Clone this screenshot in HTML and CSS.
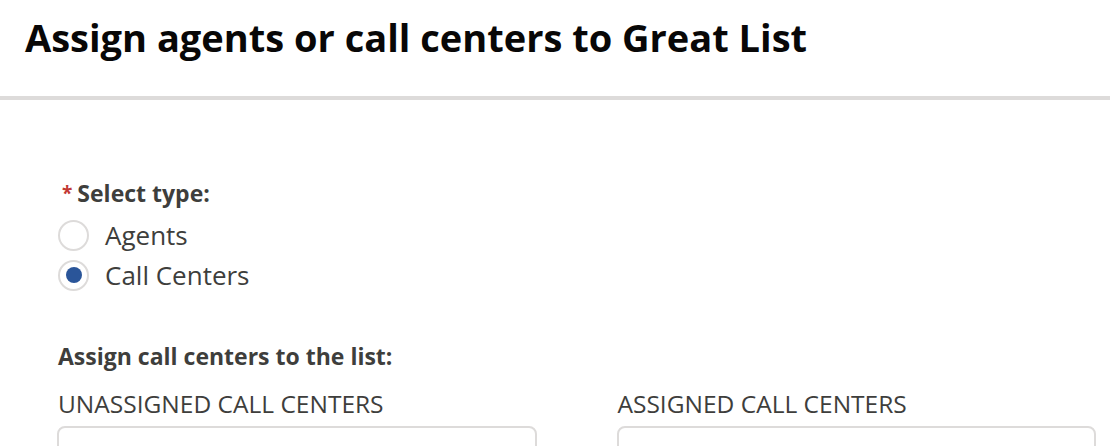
FILE: index.html
```html
<!DOCTYPE html>
<html lang="en">
<head>
<meta charset="utf-8">
<title>Assign agents or call centers</title>
<link rel="stylesheet" href="styles.css">
</head>
<body>
<header class="modal-header">
  <h1 class="title">Assign agents or call centers to Great List</h1>
</header>
<main class="modal-body">
  <div class="radio-group" role="radiogroup">
    <div class="form-label"><abbr class="required" title="required">*</abbr>Select type:</div>
    <label class="radio">
      <input type="radio" name="type" value="agents">
      <span class="radio-faux"></span>
      <span class="radio-label">Agents</span>
    </label>
    <label class="radio">
      <input type="radio" name="type" value="callcenters" checked>
      <span class="radio-faux"></span>
      <span class="radio-label">Call Centers</span>
    </label>
  </div>
  <section class="dueling">
    <h2 class="section-label">Assign call centers to the list:</h2>
    <div class="columns">
      <div class="column">
        <div class="list-label">UNASSIGNED CALL CENTERS</div>
        <div class="list-box"></div>
      </div>
      <div class="column">
        <div class="list-label">ASSIGNED CALL CENTERS</div>
        <div class="list-box"></div>
      </div>
    </div>
  </section>
</main>
</body>
</html>
```
FILE: styles.css
```css
html, body {
  margin: 0;
  padding: 0;
  background: #ffffff;
}
body {
  font-family: "Open Sans", "Noto Sans", sans-serif;
  color: #3e3e3c;
  width: 1110px;
  height: 446px;
  overflow: hidden;
}
.modal-header {
  box-sizing: border-box;
  height: 100px;
  padding: 13px 25px 0;
  border-bottom: 4px solid #dddbda;
}
.title {
  margin: 0;
  font-size: 38px;
  line-height: 48px;
  font-weight: 700;
  color: #080707;
  white-space: nowrap;
}
.modal-body {
  padding: 78px 14px 0 58px;
}
.form-label {
  font-size: 23px;
  line-height: 30px;
  font-weight: 700;
  color: #3e3e3c;
  margin-bottom: 7px;
  white-space: nowrap;
}
.required {
  color: #c23934;
  text-decoration: none;
  border: 0;
  margin: 0 5px 0 4px;
  font-weight: 700;
  font-size: 19px;
  vertical-align: 2px;
}
.radio {
  display: flex;
  align-items: center;
  height: 40px;
  cursor: pointer;
}
.radio input {
  position: absolute;
  opacity: 0;
  width: 1px;
  height: 1px;
  margin: 0;
}
.radio-faux {
  box-sizing: border-box;
  width: 31px;
  height: 31px;
  border: 2px solid #dddbda;
  border-radius: 50%;
  background: #ffffff;
  margin-right: 16px;
  display: flex;
  align-items: center;
  justify-content: center;
  flex: none;
}
.radio input:checked + .radio-faux::after {
  content: "";
  width: 16px;
  height: 16px;
  border-radius: 50%;
  background: #2a5599;
}
.radio-label {
  font-size: 26px;
  line-height: 40px;
  color: #3e3e3c;
  white-space: nowrap;
}
.dueling {
  margin-top: 46px;
}
.section-label {
  margin: 0;
  font-size: 23px;
  line-height: 30px;
  font-weight: 700;
  color: #3e3e3c;
  white-space: nowrap;
}
.columns {
  display: flex;
  gap: 81px;
  margin-top: 17px;
}
.column {
  width: 479px;
}
.list-label {
  font-size: 24.5px;
  line-height: 32px;
  color: #3e3e3c;
  margin-bottom: 6px;
  white-space: nowrap;
}
.list-box {
  box-sizing: border-box;
  height: 120px;
  border: 2px solid #dddbda;
  border-radius: 8px;
  margin-left: -1px;
}
```
